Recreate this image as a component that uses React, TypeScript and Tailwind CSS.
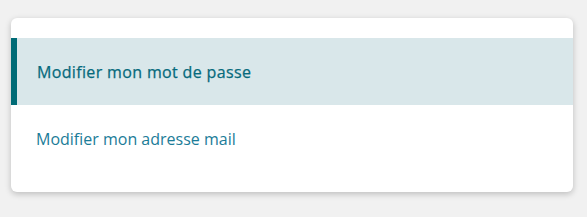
export default function App() {
  return (
    <div className="min-h-[217px] w-[587px] bg-[#f1f1f1] pl-[11px] pt-[18px]" style={{ fontFamily: '"Open Sans", "Noto Sans", sans-serif' }}>
      <div className="w-[562px] h-[174px] rounded-[6px] bg-white shadow-[0_2px_6px_rgba(0,0,0,0.22)] pt-[20px] overflow-hidden">
        <div className="h-[67px] flex items-center bg-[#d9e7ea] border-l-[6px] border-[#006b76] pl-[20px]">
          <span className="text-[16px] font-medium tracking-[0.35px] text-[#066a7c] [-webkit-text-stroke:0.25px_#066a7c]">Modifier mon mot de passe</span>
        </div>
        <div className="h-[67px] flex items-center pl-[25px]">
          <span className="text-[16px] text-[#1b7c98]">Modifier mon adresse mail</span>
        </div>
      </div>
    </div>
  );
}
